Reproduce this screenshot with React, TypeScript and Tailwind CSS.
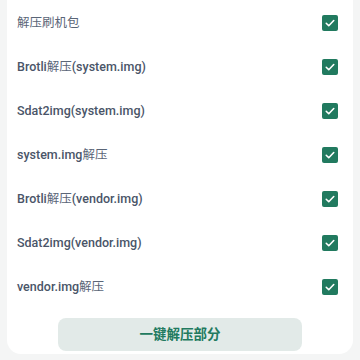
import React, { useState } from 'react';

const ITEMS = [
  '解压刷机包',
  'Brotli解压(system.img)',
  'Sdat2img(system.img)',
  'system.img解压',
  'Brotli解压(vendor.img)',
  'Sdat2img(vendor.img)',
  'vendor.img解压',
];

// CJK glyphs render at regular weight next to the medium Latin text
function Label({ text }: { text: string }) {
  const parts = text.split(/([\u4e00-\u9fff]+)/).filter(Boolean);
  return (
    <span className="text-[12.5px] font-medium text-[#4a5568]">
      {parts.map((p, i) =>
        /[\u4e00-\u9fff]/.test(p) ? (
          <span key={i} className="font-normal text-[#5a6577]">{p}</span>
        ) : (
          <span key={i}>{p}</span>
        )
      )}
    </span>
  );
}

function Check({ on, onClick }: { on: boolean; onClick: () => void }) {
  return (
    <button
      onClick={onClick}
      className={`w-[16px] h-[16px] rounded-[2px] flex items-center justify-center ${on ? 'bg-[#217a5f]' : 'border-2 border-[#6b7280] bg-white'}`}
    >
      {on && (
        <svg width="12" height="12" viewBox="0 0 24 24" fill="none" stroke="white" strokeWidth="3.2" strokeLinecap="round" strokeLinejoin="round">
          <path d="M4.5 12.5l5 5L19.5 7" />
        </svg>
      )}
    </button>
  );
}

export default function App() {
  const [checked, setChecked] = useState(ITEMS.map(() => true));

  const toggle = (i: number) =>
    setChecked((prev) => prev.map((v, j) => (j === i ? !v : v)));

  return (
    <div className="w-[360px] h-[360px] overflow-hidden bg-[#f4f5f5] font-['Roboto','Noto_Sans_CJK_SC',sans-serif]">
      <div className="mx-[7px] bg-white rounded-b-[14px] pb-[3px]">
        <div className="flex flex-col pt-[1px]">
          {ITEMS.map((label, i) => (
            <div key={label} className="h-[44px] flex items-center justify-between pl-[10px] pr-[15px]">
              <Label text={label} />
              <Check on={checked[i]} onClick={() => toggle(i)} />
            </div>
          ))}
        </div>
        <div className="flex justify-center pt-[9px]">
          <button className="w-[244px] h-[33px] rounded-[8px] bg-[#e2eae8] text-[#217a5f] text-[13.5px] font-bold">
            一键解压部分
          </button>
        </div>
      </div>
    </div>
  );
}
